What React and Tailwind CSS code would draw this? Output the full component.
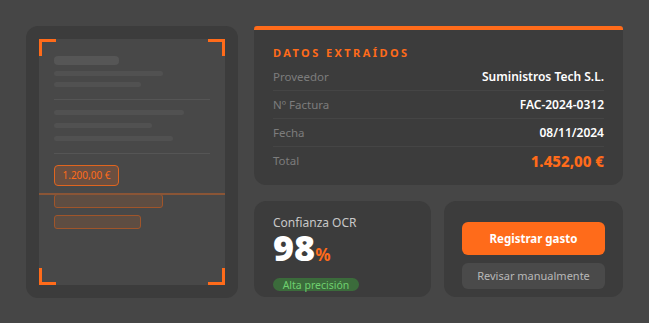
const Corner = ({ className }) => (
    <span className={`absolute w-[17px] h-[17px] border-[#ff6b1a] ${className}`} />
);

const Row = ({ label, value, last, total }) => (
    <div className={`flex items-center justify-between h-[28px] ${last ? '' : 'border-b border-[#454545]'}`}>
        <span className="text-[11.5px] text-[#7d7d7d]">{label}</span>
        {total ? (
            <span className="text-[15px] font-extrabold text-[#ff6b1a]">{value}</span>
        ) : (
            <span className="text-[12px] font-semibold text-white">{value}</span>
        )}
    </div>
);

const App = () => {
    return (
        <div
            className="w-[649px] h-[323px] bg-[#464646] flex gap-4 p-[26px]"
            style={{ fontFamily: '"Noto Sans", "Open Sans", sans-serif' }}
        >
            {/* documento escaneado */}
            <div className="w-[212px] h-[272px] bg-[#3c3c3c] rounded-xl p-[13px] shrink-0">
                <div className="relative h-full bg-[#484848] px-[15px] pt-[17px]">
                    <Corner className="top-0 left-0 border-t-[3px] border-l-[3px]" />
                    <Corner className="top-0 right-0 border-t-[3px] border-r-[3px]" />
                    <Corner className="bottom-0 left-0 border-b-[3px] border-l-[3px]" />
                    <Corner className="bottom-0 right-0 border-b-[3px] border-r-[3px]" />

                    <div className="w-[65px] h-[9px] rounded bg-[#565656]" />
                    <div className="w-[109px] h-[5px] rounded-full bg-[#515151] mt-[6px]" />
                    <div className="w-[87px] h-[5px] rounded-full bg-[#515151] mt-[6px]" />
                    <div className="h-px bg-[#555555] mt-[12px]" />
                    <div className="w-[130px] h-[5px] rounded-full bg-[#515151] mt-[10px]" />
                    <div className="w-[98px] h-[5px] rounded-full bg-[#515151] mt-[8px]" />
                    <div className="w-[119px] h-[5px] rounded-full bg-[#515151] mt-[8px]" />
                    <div className="h-px bg-[#555555] mt-[12px]" />
                    <div className="w-[65px] h-[21px] mt-[11px] rounded border border-[#e0651f] bg-[#6b4f40] flex items-center justify-center text-[10px] text-[#ff6b1a]">
                        1.200,00 €
                    </div>
                    <div className="absolute left-0 right-0 top-[154px] h-[2px] bg-[#8a5536]" />
                    <div className="w-[109px] h-[14px] mt-[8px] rounded-[3px] border border-[#a0552a] bg-[#5e4d42]" />
                    <div className="w-[87px] h-[14px] mt-[7px] rounded-[3px] border border-[#a0552a] bg-[#5e4d42]" />
                </div>
            </div>

            <div className="w-[370px] flex flex-col gap-4">
                {/* datos extraídos */}
                <div className="h-[160px] bg-[#3c3c3c] rounded-t-[3px] rounded-b-xl border-t-4 border-[#ff6b1a] px-[19px] pt-[16px]">
                    <div className="text-[11px] font-bold tracking-[0.22em] text-[#ff6b1a] leading-[14px]">
                        DATOS EXTRAÍDOS
                    </div>
                    <div className="mt-[3px]">
                        <Row label="Proveedor" value="Suministros Tech S.L." />
                        <Row label="Nº Factura" value="FAC-2024-0312" />
                        <Row label="Fecha" value="08/11/2024" />
                        <Row label="Total" value="1.452,00 €" last total />
                    </div>
                </div>

                <div className="flex gap-[13px] h-[96px]">
                    {/* confianza */}
                    <div className="w-[177px] bg-[#3c3c3c] rounded-xl px-[19px] pt-[14px]">
                        <div className="text-[12px] leading-4 text-[#c8c8c8]">Confianza OCR</div>
                        <div className="flex items-baseline h-[33px] leading-[33px]">
                            <span className="text-[36px] font-black text-white">98</span>
                            <span className="text-[17px] font-bold text-[#ff6b1a]">%</span>
                        </div>
                        <div className="mt-[14px] w-[86px] h-[13px] rounded-full bg-[#3b6b3b] flex items-center justify-center text-[10.5px] leading-none text-[#6fd06f]">
                            Alta precisión
                        </div>
                    </div>

                    {/* acciones */}
                    <div className="flex-1 bg-[#3c3c3c] rounded-xl px-[18px] pt-[21px] flex flex-col gap-2">
                        <button className="h-[33px] rounded-md bg-[#ff6b1a] text-white text-[11.5px] font-bold">
                            Registrar gasto
                        </button>
                        <button className="h-[26px] rounded-md bg-[#4a4a4a] text-[#b8b8b8] text-[11px]">
                            Revisar manualmente
                        </button>
                    </div>
                </div>
            </div>
        </div>
    );
};

export default App;
